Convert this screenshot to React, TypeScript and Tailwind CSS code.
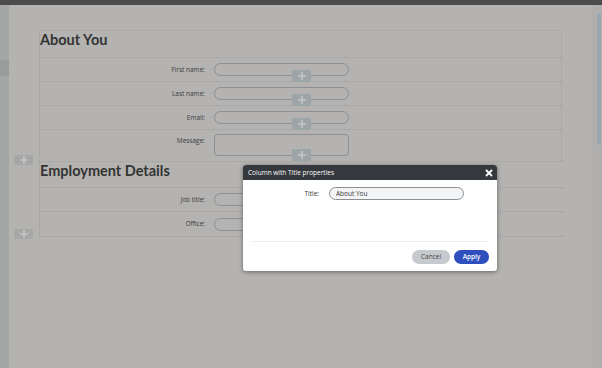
import React from "react";

const font = { fontFamily: '"Open Sans", "Noto Sans", sans-serif' };
const headFont = { fontFamily: 'Lato, "Open Sans", sans-serif' };

function PlusBadge({ className }: { className: string }) {
  return (
    <div className={`absolute flex items-center justify-center rounded-[1px] ${className}`}>
      <svg width="10" height="10" viewBox="0 0 10 10">
        <path d="M5 1v8M1 5h8" stroke="#c3c7c8" strokeWidth="1.6" />
      </svg>
    </div>
  );
}

function Row({ label, tall = false, last = false }: { label: string; tall?: boolean; last?: boolean }) {
  return (
    <div
      className={`relative flex ${tall ? "h-[31px] items-start pt-[4px]" : "h-[24px] items-center"} ${
        last ? "" : "border-b border-dotted border-[#9f9f9e]"
      }`}
    >
      <div className={`w-[165px] text-right text-[6.5px] text-[#3b3b3b] ${tall ? "pt-[2px]" : ""}`}>{label}</div>
      {tall ? (
        <div className="ml-[9px] h-[22px] w-[135px] rounded-[4px] border border-[#8b8f91]" />
      ) : (
        <div className="ml-[9px] h-[13px] w-[135px] rounded-full border border-[#8b8f91]" />
      )}
      <PlusBadge className={`left-[252px] ${tall ? "top-[19px]" : "top-[12px]"} h-[12px] w-[19px] bg-[#9ca6a9]`} />
    </div>
  );
}

export default function App() {
  return (
    <div className="relative h-[368px] w-[602px] overflow-hidden bg-[#b4b3b1]" style={font}>
      <div className="h-[5px] bg-[#4c4c4e]" />
      <div className="flex h-[363px]">
        <div className="w-[9px] bg-[#a5a7a7] pt-[55px]">
          <div className="h-[16px] bg-[#9a9c9c]" />
        </div>
        <div className="relative flex-1 pl-[30px] pt-[25px]">
          <div className="w-[523px] border-l border-r border-t border-dotted border-[#9f9f9e]">
            <div className="flex h-[27px] items-start border-b border-dotted border-[#9f9f9e]">
              <h1 className="text-[14.5px] font-bold leading-[18px] text-[#333333]" style={headFont}>About You</h1>
            </div>
            <Row label="First name:" />
            <Row label="Last name:" />
            <Row label="Email:" />
            <Row label="Message:" tall last />
          </div>
          <div className="w-[526px] border-b border-l border-t border-dotted border-[#9f9f9e]">
            <div className="flex h-[26px] items-start border-b border-dotted border-[#9f9f9e]">
              <h1 className="text-[14.5px] font-bold leading-[18px] text-[#333333]" style={headFont}>Employment Details</h1>
            </div>
            <Row label="Job title:" />
            <Row label="Office:" last />
          </div>
          <PlusBadge className="left-[5px] top-[150px] h-[10px] w-[19px] bg-[#a7a7a6]" />
          <PlusBadge className="left-[5px] top-[224px] h-[10px] w-[19px] bg-[#a7a7a6]" />
        </div>
        <div className="w-[10px] bg-[#b0afad] pl-[5px] pt-[8px]">
          <div className="h-[132px] w-[4px] rounded-full bg-[#9ba7b0]" />
        </div>
      </div>

      <div className="absolute left-[243px] top-[165px] w-[254px] overflow-hidden rounded-[3px] bg-white shadow-[0_1px_4px_rgba(0,0,0,0.45)]">
        <div className="flex h-[15px] items-center justify-between bg-[#35383d] pl-[5px] pr-[4px]">
          <span className="text-[6.5px] text-white">Column with Title properties</span>
          <svg width="8" height="8" viewBox="0 0 8 8">
            <path d="M1 1l6 6M7 1l-6 6" stroke="#ffffff" strokeWidth="1.8" />
          </svg>
        </div>
        <div className="flex items-center pt-[7px]">
          <div className="w-[76px] text-right text-[6.5px] text-[#333333]">Title:</div>
          <div className="ml-[10px] flex h-[13px] w-[135px] items-center rounded-full border border-[#8b8f91] bg-[#f3f4f6] pl-[6px] text-[6.5px] text-[#333333]">
            About You
          </div>
        </div>
        <div className="mx-[8px] mt-[41px] border-t border-[#eeeeee]" />
        <div className="flex justify-end gap-[4px] pb-[7px] pr-[8px] pt-[8px]">
          <div className="flex h-[14px] w-[38px] items-center justify-center rounded-full bg-[#c6c9ce] text-[6.5px] text-[#444444]">
            Cancel
          </div>
          <div className="flex h-[14px] w-[35px] items-center justify-center rounded-full bg-[#2f4fbf] text-[6.5px] font-semibold text-white">
            Apply
          </div>
        </div>
      </div>
    </div>
  );
}
